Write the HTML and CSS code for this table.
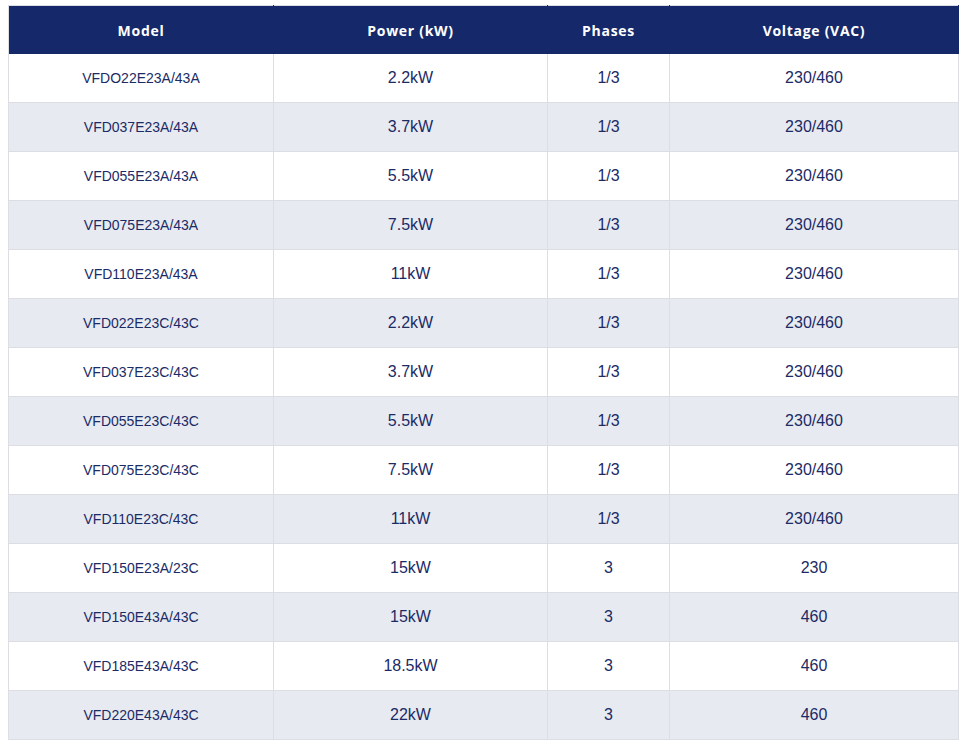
FILE: index.html
```html
<!DOCTYPE html>
<html>
<head>
<meta charset="utf-8">
<link rel="stylesheet" href="styles.css">
</head>
<body>
<table class="spec">
  <colgroup>
    <col class="c-model"><col class="c-power"><col class="c-phase"><col class="c-volt">
  </colgroup>
  <thead>
    <tr><th>Model</th><th>Power (kW)</th><th>Phases</th><th>Voltage (VAC)</th></tr>
  </thead>
  <tbody>
    <tr><td class="model">VFDO22E23A/43A</td><td>2.2kW</td><td>1/3</td><td>230/460</td></tr>
    <tr><td class="model">VFD037E23A/43A</td><td>3.7kW</td><td>1/3</td><td>230/460</td></tr>
    <tr><td class="model">VFD055E23A/43A</td><td>5.5kW</td><td>1/3</td><td>230/460</td></tr>
    <tr><td class="model">VFD075E23A/43A</td><td>7.5kW</td><td>1/3</td><td>230/460</td></tr>
    <tr><td class="model">VFD110E23A/43A</td><td>11kW</td><td>1/3</td><td>230/460</td></tr>
    <tr><td class="model">VFD022E23C/43C</td><td>2.2kW</td><td>1/3</td><td>230/460</td></tr>
    <tr><td class="model">VFD037E23C/43C</td><td>3.7kW</td><td>1/3</td><td>230/460</td></tr>
    <tr><td class="model">VFD055E23C/43C</td><td>5.5kW</td><td>1/3</td><td>230/460</td></tr>
    <tr><td class="model">VFD075E23C/43C</td><td>7.5kW</td><td>1/3</td><td>230/460</td></tr>
    <tr><td class="model">VFD110E23C/43C</td><td>11kW</td><td>1/3</td><td>230/460</td></tr>
    <tr><td class="model">VFD150E23A/23C</td><td>15kW</td><td>3</td><td>230</td></tr>
    <tr><td class="model">VFD150E43A/43C</td><td>15kW</td><td>3</td><td>460</td></tr>
    <tr><td class="model">VFD185E43A/43C</td><td>18.5kW</td><td>3</td><td>460</td></tr>
    <tr><td class="model">VFD220E43A/43C</td><td>22kW</td><td>3</td><td>460</td></tr>
  </tbody>
</table>
</body>
</html>
```
FILE: styles.css
```css
html, body {
  margin: 0;
  padding: 0;
  background: #ffffff;
}
body {
  padding: 5px 8px 0 8px;
  font-family: "Liberation Sans", Arial, sans-serif;
}
.spec {
  width: 950px;
  border-collapse: collapse;
  table-layout: fixed;
  border: 1px solid #dcdee3;
}
.c-model { width: 265px; }
.c-power { width: 274px; }
.c-phase { width: 122px; }
.c-volt { width: 289px; }
.spec th {
  background: #15296a;
  color: #ffffff;
  font-family: "Open Sans", "Noto Sans", sans-serif;
  font-weight: 700;
  font-size: 14px;
  letter-spacing: 0.7px;
  height: 48px;
  padding: 0 10px;
  text-align: center;
  border-right: 1px solid #15296a;
}
.spec td {
  height: 48px;
  padding: 0 10px;
  text-align: center;
  color: #1b2b66;
  font-size: 16px;
  border-right: 1px solid #dcdee3;
  border-bottom: 1px solid #dcdee3;
}
.spec td.model {
  font-size: 14px;
}
.spec tbody tr:nth-child(even) td {
  background: #e7eaf1;
}
```
